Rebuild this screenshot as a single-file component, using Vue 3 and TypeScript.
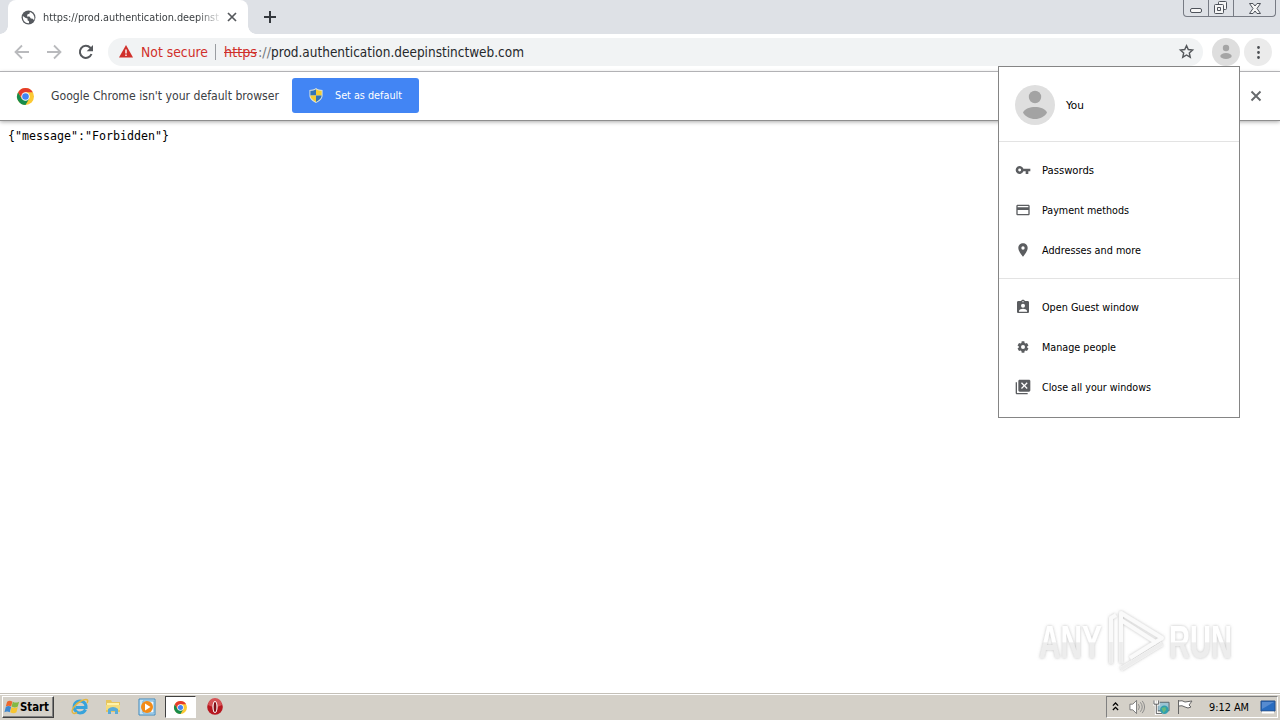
<script setup lang="ts">
interface MenuItem {
  label: string
  icon: string
  width: number
}

const credentials: MenuItem[] = [
  { label: 'Passwords', width: 52, icon: 'M12.65 10A6 6 0 1 0 12.65 14H16v4h4v-4h3v-4zM7 14.2A2.2 2.2 0 1 1 7 9.8a2.2 2.2 0 0 1 0 4.4z' },
  { label: 'Payment methods', width: 87, icon: 'M20 4H4c-1.1 0-2 .9-2 2v12c0 1.1.9 2 2 2h16c1.1 0 2-.9 2-2V6c0-1.1-.9-2-2-2zm0 14H4v-6h16v6zm0-10H4V6h16v2z' },
  { label: 'Addresses and more', width: 99, icon: 'M12 2C8.1 2 5 5.1 5 9c0 5.3 7 13 7 13s7-7.7 7-13c0-3.900-3.100-7-7-7zm0 9.500a2.500 2.500 0 1 1 0-5 2.500 2.500 0 0 1 0 5z' },
]

const people: MenuItem[] = [
  { label: 'Open Guest window', width: 97, icon: 'M19 3h-4.200C14.400 1.800 13.300 1 12 1s-2.400.8-2.800 2H5c-1.100 0-2 .9-2 2v14c0 1.100.9 2 2 2h14c1.100 0 2-.9 2-2V5c0-1.100-.9-2-2-2zm-7 0a1 1 0 1 1 0 2 1 1 0 0 1 0-2zm0 4a3 3 0 1 1 0 6 3 3 0 0 1 0-6zm6 12H6v-1.400c0-2 4-3.100 6-3.100s6 1.100 6 3.100V19z' },
  { label: 'Manage people', width: 74, icon: 'M18.2 12.8a6.300 6.300 0 0 0 0-1.600l2-1.500-2.200-3.800-2.300.9a6.500 6.500 0 0 0-1.300-.8L14 3.500h-4l-.4 2.500c-.5.2-.9.500-1.300.8L6 5.900 3.800 9.700l2 1.500a6.300 6.300 0 0 0 0 1.600l-2 1.500L6 18.100l2.300-.9c.4.300.8.600 1.300.8l.4 2.500h4l.4-2.500c.5-.2.9-.5 1.300-.8l2.300.9 2.200-3.800zM12 15a3 3 0 1 1 0-6 3 3 0 0 1 0 6z' },
  { label: 'Close all your windows', width: 109, icon: 'M1 5h2v16h16v2H3c-1.100 0-2-.9-2-2zM21 1H7C5.900 1 5 1.900 5 3v14c0 1.100.9 2 2 2h14c1.100 0 2-.9 2-2V3c0-1.100-.9-2-2-2zm-2 12.600L17.600 15 14 11.400 10.400 15 9 13.600l3.600-3.600L9 6.400 10.400 5 14 8.600 17.600 5 19 6.400 15.400 10z' },
]

const groups: MenuItem[][] = [credentials, people]
</script>

<template>
  <div class="screen">
    <header class="tabs">
      <div class="tab">
        <svg class="globe" viewBox="0 0 16 16"><circle cx="8" cy="8" r="7.400" fill="#55595e" /><path d="M2 6.500 5 8.500 7 9v2l1.500 1v2.200C4.500 14.500 1.600 11.500 2 6.500zM9.500 2.200 9 4 7 4.600 6.300 7 9 7l1.500 2 2 .3L14 11c1.200-3.800-1-7.700-4.500-8.800z" fill="#fff" /></svg>
        <div class="title"><svg width="176" height="16"><text x="0" y="12" textLength="176" lengthAdjust="spacingAndGlyphs">https://prod.authentication.deepinst</text></svg></div>
        <svg class="tab-close" viewBox="0 0 10 10"><path d="m1 1 8 8m0-8-8 8" /></svg>
      </div>
      <svg class="plus" viewBox="0 0 12 12"><path d="M6 0v12M0 6h12" /></svg>
      <div class="controls">
        <span><svg width="13" height="6"><rect x=".5" y=".5" width="11" height="4" rx="1.500" /></svg></span>
        <span><svg width="14" height="14"><path d="M4.500 3.500v-2q0-1 1-1h6q1 0 1 1v6q0 1-1 1h-2M1.500 3.500h7q1 0 1 1v7q0 1-1 1h-7q-1 0-1-1v-7q0-1 1-1zM3.500 6.500h3v3h-3z" /></svg></span>
        <span><svg width="12" height="11"><path d="M.5.5H4L6 3 8 .5h3.500L8 5.500l3.500 5H8L6 8l-2 2.500H.5L4 5.500z" /></svg></span>
      </div>
    </header>

    <nav class="toolbar">
      <svg class="nav" viewBox="0 0 16 16"><path d="M15 8H2M8 1.500 1.500 8 8 14.500" /></svg>
      <svg class="nav" viewBox="0 0 16 16"><path d="M1 8h13M8 1.500 14.500 8 8 14.500" /></svg>
      <svg class="nav reload" viewBox="0 0 16 16"><path d="M13.500 10A6 6 0 1 1 12.300 3.800L14 5.500" /><path class="solid" d="M15 1v6.300H8.700z" /></svg>
      <div class="omnibox">
        <svg class="warning" viewBox="0 0 14 13"><path d="M7 0 14 12.500H0z" fill="#d0302b" /><path d="M7 4.500v4M7 9.600v1.400" stroke="#fff" stroke-width="1.400" /></svg>
        <svg class="insecure" width="68" height="18"><text x="0" y="14" textLength="67" lengthAdjust="spacingAndGlyphs">Not secure</text></svg>
        <i class="separator"></i>
        <svg class="url" width="302" height="18">
          <text x="0" y="14" class="scheme" textLength="33" lengthAdjust="spacingAndGlyphs">https</text>
          <path d="M0 9.500h33" stroke="#d0302b" />
          <text x="34" y="14" class="slashes" textLength="13" lengthAdjust="spacingAndGlyphs">://</text>
          <text x="47" y="14" textLength="253" lengthAdjust="spacingAndGlyphs">prod.authentication.deepinstinctweb.com</text>
        </svg>
        <svg class="star" viewBox="0 0 16 16"><path d="m8 1.700 1.900 4.200 4.600.5L11 9.500l1 4.600-4-2.400-4 2.400 1-4.600-3.500-3.100 4.600-.5z" /></svg>
      </div>
      <svg class="round" viewBox="0 0 28 28"><circle cx="14" cy="14" r="14" fill="#dedede" /><circle cx="14" cy="10" r="3.200" fill="#a5a5a5" /><ellipse cx="14" cy="18" rx="5.700" ry="3" fill="#a5a5a5" /></svg>
      <svg class="round more" viewBox="0 0 28 28"><circle cx="14" cy="14" r="14" fill="#ebebeb" /><path d="M14.500 9.500h.01M14.500 14.500h.01M14.500 19.500h.01" stroke="#4b4e52" stroke-width="2.800" stroke-linecap="round" /></svg>
    </nav>

    <section class="infobar">
      <svg class="chrome" viewBox="0 0 18 18"><use href="#chrome-logo" /></svg>
      <svg class="notice" width="230" height="18"><text x="0" y="13" textLength="228" lengthAdjust="spacingAndGlyphs">Google Chrome isn't your default browser</text></svg>
      <button>
        <svg class="shield" viewBox="0 0 14 16"><path d="M7 0c2 1.500 4.500 2 7 2v6c0 3.500-3 6-7 8-4-2-7-4.500-7-8V2c2.500 0 5-.5 7-2z" fill="#dce3dc" /><path d="M7 1.300V8H1V3c2.200 0 4.300-.5 6-1.700z" fill="#3274b5" /><path d="M7 1.300C8.700 2.500 10.800 3 13 3v5H7z" fill="#f4cd31" /><path d="M1 8h6v6.800C3.500 13 1 11 1 8z" fill="#f4cd31" /><path d="M7 8h6c0 3-2.500 5-6 6.800z" fill="#3274b5" /></svg>
        <svg width="68" height="16"><text x="0" y="12" textLength="67" lengthAdjust="spacingAndGlyphs">Set as default</text></svg>
      </button>
      <svg class="dismiss" viewBox="0 0 10 10"><path d="m.5.5 9 9m0-9-9 9" /></svg>
    </section>

    <main>
      <svg width="164" height="18"><text x="0" y="13" textLength="161" lengthAdjust="spacingAndGlyphs">{"message":"Forbidden"}</text></svg>
    </main>

    <aside class="menu">
      <div class="you">
        <svg class="avatar" viewBox="0 0 40 40"><circle cx="20" cy="20" r="20" fill="#dfdfdf" /><circle cx="20" cy="12" r="6.200" fill="#a3a3a3" /><path d="M8 27.500C10 23.500 15 22 20 22s10 1.500 12 5.500c-2 4-7 6.500-12 6.500S10 31.500 8 27.500z" fill="#a3a3a3" /></svg>
        <svg width="20" height="16"><text x="0" y="12" textLength="18" lengthAdjust="spacingAndGlyphs">You</text></svg>
      </div>
      <div v-for="(group, index) in groups" :key="index" class="group">
        <div v-for="item in group" :key="item.label" class="item">
          <svg class="item-icon" viewBox="0 0 24 24"><path :d="item.icon" fill-rule="evenodd" /></svg>
          <svg width="120" height="16"><text x="0" y="12" :textLength="item.width" lengthAdjust="spacingAndGlyphs">{{ item.label }}</text></svg>
        </div>
      </div>
    </aside>

    <svg class="watermark" viewBox="0 0 210 74">
      <defs>
        <linearGradient id="silver" x1="0" y1="0" x2="0" y2="1"><stop offset=".49" stop-color="#fff" /><stop offset=".52" stop-color="#ededed" /></linearGradient>
        <filter id="halo" x="-10%" y="-20%" width="120%" height="140%"><feDropShadow dx="0" dy="0" stdDeviation="1.800" flood-color="#888" flood-opacity=".55" /></filter>
      </defs>
      <g filter="url(#halo)">
        <g class="brand"><text x="9" y="53" textLength="63" lengthAdjust="spacingAndGlyphs">ANY</text><text x="139" y="53" textLength="63" lengthAdjust="spacingAndGlyphs">RUN</text></g>
        <path d="M81 58V13l5-3M91 58V8l41 25-32 20M91 15l36 23M91 64l41-25" fill="none" stroke="#fafafa" stroke-width="4" stroke-linejoin="round" />
        <path d="M81 59V37M91 58V37M91 64l41-25" fill="none" stroke="#ededed" stroke-width="3.500" />
      </g>
    </svg>

    <footer class="taskbar">
      <div class="start">
        <svg class="flag" viewBox="0 0 18 16"><path d="M3.500 2q3-2 6 0L8 7.500q-3-2-6 0z" fill="#ed672d" /><path d="M10 2q3 2 7 0l-1.500 5.500q-3 2-7 0z" fill="#83b944" /><path d="M2 8q3-2 6 0l-1.500 6q-3-2-6 0z" fill="#3e87cf" /><path d="M8.500 8q3 2 7 0L14 14q-3 2-7 0z" fill="#f7c531" /></svg>
        <svg width="30" height="16"><text x="0" y="12" textLength="29" lengthAdjust="spacingAndGlyphs">Start</text></svg>
      </div>
      <svg class="app ie" viewBox="0 0 18 18"><path d="M14.500 11.500A6 6 0 1 1 15 8v1.500H5" fill="none" stroke="#38a3db" stroke-width="3" /><path d="M2 15C-1 13 4 6 10 3s8-1 6 2M2 15c1 1 3 0 4-.5" fill="none" stroke="#e3b640" stroke-width="1.500" /></svg>
      <svg class="app folder" viewBox="0 0 18 18"><path d="M2 2h5l1 2h8v10H2z" fill="#e7c55e" /><path d="M3 5h12v6H3z" fill="#fff2a8" /><path d="M2 7h14v5H2z" fill="#f4dc7d" /><path d="M4 16v-5q5-4 10 0v5h-3v-3H7v3z" fill="#58abd8" /></svg>
      <svg class="app media" viewBox="0 0 18 18"><path d="M1 1h16v16H1z" fill="#c8e5f6" stroke="#3e89bd" /><path d="M5 3h11v12H5z" fill="#f5f9fc" stroke="#67a9d5" /><circle cx="9" cy="9" r="6" fill="#f28b18" /><path d="m7 5.500 5.500 3.500L7 12.500z" fill="#fff" /></svg>
      <div class="active">
        <svg class="small-chrome" viewBox="0 0 18 18">
          <g id="chrome-logo"><circle cx="9" cy="9" r="9" fill="#fcc934" /><path d="M1.200 4.500A9 9 0 0 0 9 18l3.900-6.750L5.100 11.250z" fill="#188c4b" /><path d="M1.200 4.500A9 9 0 0 1 16.800 4.500H9L5.100 11.250z" fill="#e53b2d" /><circle cx="9" cy="9" r="4.500" fill="#fff" /><circle cx="9" cy="9" r="3.500" fill="#4285f4" /></g>
        </svg>
      </div>
      <svg class="app opera" viewBox="0 0 18 18"><circle cx="9" cy="9" r="7.800" fill="#b71720" /><path d="M2 7a7 7 0 0 1 14 0q-7 4-14 0" fill="#d65356" /><ellipse cx="9" cy="9" rx="2.600" ry="6" fill="#fff" /><ellipse cx="9" cy="9" rx="1.400" ry="5" fill="#821017" /></svg>
      <div class="tray">
        <svg class="chevron" viewBox="0 0 8 10"><path d="m1 4 3-3 3 3M1 9l3-3 3 3" fill="none" stroke="#000" stroke-width="1.500" /></svg>
        <svg class="speaker" viewBox="0 0 18 16"><path d="M1 5h3l4-4v14l-4-4H1z" fill="#fff" stroke="#777" /><path d="M10 5q2 3 0 6M12 3q4 5 0 10M14 1.500q5 6.500 0 13" fill="none" stroke="#888" /></svg>
        <svg class="network" viewBox="0 0 18 16"><path d="M5 3h12v9H5z" fill="#9bc4d4" stroke="#55646b" /><path d="M1.500 1v4h4V1M3.500 5v10h6" fill="none" stroke="#fff" stroke-width="3" /><path d="M1 1v4h5V1M3.500 5v10h6" fill="none" stroke="#555" /><circle cx="12" cy="11" r="4.500" fill="#319fae" /><path d="m9 9 4-1 1 3-3 3z" fill="#68b87c" /></svg>
        <svg class="action" viewBox="0 0 16 16"><path d="M1.500 1v14M2 2q3-1 6 1l7-1-3 4 2 2q-3 2-6 0-3-2-6-1" fill="#fff" stroke="#666" /></svg>
        <svg class="clock" width="42" height="16"><text x="0" y="12" textLength="40" lengthAdjust="spacingAndGlyphs">9:12 AM</text></svg>
        <svg class="desktop" viewBox="0 0 16 14"><path d="M1 1h14v10H1z" fill="#286cc0" stroke="#244e89" /><path d="M2 2h12L2 9z" fill="#568bd0" /><path d="M2 12.500h12" stroke="#fff" stroke-width="2" /></svg>
      </div>
    </footer>
  </div>
</template>

<style>
body { overflow: hidden; }
</style>

<style scoped>
* { box-sizing: border-box; }
.screen { position: relative; display: flex; flex-direction: column; width: 1280px; height: 720px; overflow: hidden; background: #fff; color: #000; font: 11px "DejaVu Sans Condensed", "Noto Sans", sans-serif; }
svg { display: block; flex: none; overflow: visible; }
.tabs { height: 34px; background: #dee1e6; display: flex; padding-left: 8px; align-items: flex-start; }
.tab { position: relative; width: 240px; height: 34px; background: #fff; border-radius: 8px 8px 0 0; display: flex; align-items: center; padding-left: 13px; }
.tab::before, .tab::after { content: ''; position: absolute; width: 8px; height: 8px; bottom: 0; }
.tab::before { left: -8px; background: radial-gradient(circle at 0 0, transparent 7.500px, #fff 8px); }
.tab::after { right: -8px; background: radial-gradient(circle at 100% 0, transparent 7.500px, #fff 8px); }
.globe { width: 15px; height: 15px; margin-right: 7px; }
.title { width: 177px; mask-image: linear-gradient(90deg, #000 154px, transparent 180px); fill: #3c4043; }
.tab-close { width: 10px; height: 10px; margin-left: 7px; fill: none; stroke: #55585c; stroke-width: 1.700; }
.plus { width: 12px; height: 12px; margin: 11px 0 0 16px; stroke: #34383d; stroke-width: 2; }
.controls { display: flex; width: 93px; height: 17px; margin-left: auto; margin-right: 4px; border: 1px solid #777b84; border-top: 0; border-radius: 0 0 4px 4px; }
.controls span { width: 25px; display: grid; place-items: center; border-right: 1px solid #777b84; }
.controls span:first-child { padding-top: 5px; }
.controls span:last-child { width: 41px; border: 0; }
.controls svg { fill: #f6f6f6; stroke: #4e535b; stroke-width: 1; }
.toolbar { height: 38px; display: flex; align-items: center; padding: 0 0 2px 14px; border-bottom: 1px solid #b4b4b8; }
.nav { width: 16px; height: 16px; margin-right: 16px; fill: none; stroke: #b9babd; stroke-width: 1.800; }
.reload { margin-right: 14px; stroke: #55585c; stroke-width: 2; }
.reload .solid { fill: #55585c; stroke: none; }
.omnibox { display: flex; align-items: center; width: 1095px; height: 28px; border-radius: 14px; background: #f1f3f4; padding-left: 11px; font-size: 14px; }
.warning { width: 14px; height: 13px; }
.insecure { margin-left: 8px; fill: #d0302b; }
.separator { width: 1px; height: 16px; background: #9a9da1; margin: 0 8px 0 6px; }
.url { fill: #25282b; }
.scheme { fill: #d0302b; }
.slashes { fill: #73777b; }
.star { width: 15px; height: 15px; margin: 0 9px 0 auto; fill: none; stroke: #55585c; stroke-width: 1.500; }
.round { width: 28px; height: 28px; margin-left: 9px; }
.more { margin-left: 4px; }
.infobar { height: 49px; border-bottom: 1px solid #8e8e8e; box-shadow: 0 1px 4px #aaa; display: flex; align-items: center; padding: 0 19px 0 17px; }
.chrome { width: 17px; height: 17px; }
.notice { margin-left: 17px; font-size: 12px; fill: #3c4043; }
.infobar button { width: 127px; height: 35px; margin: 0 0 2px 11px; border: 0; border-radius: 3px; background: #4285f4; color: #fff; fill: #fff; padding: 0 0 0 17px; display: flex; align-items: center; font: inherit; }
.shield { width: 14px; height: 15px; margin-right: 12px; }
.dismiss { width: 10px; height: 10px; margin-left: auto; fill: none; stroke: #66696c; stroke-width: 1.900; }
main { padding: 6px 8px; font: 12px "DejaVu Sans Mono", monospace; flex: 1; }
.menu { position: absolute; left: 998px; top: 66px; width: 242px; height: 352px; background: #fff; border: 1px solid #858585; }
.you { height: 75px; border-bottom: 1px solid #e3e3e3; display: flex; align-items: center; padding: 2px 0 0 16px; }
.avatar { width: 40px; height: 40px; margin-right: 11px; }
.group { height: 137px; padding-top: 8px; border-bottom: 1px solid #e3e3e3; }
.group:last-child { border: 0; }
.item { height: 40px; padding-left: 16px; display: flex; align-items: center; }
.item-icon { width: 16px; height: 16px; margin-right: 11px; fill: #5b5d60; }
.watermark { position: absolute; left: 1030px; top: 605px; width: 210px; height: 74px; }
.brand { font: bold 46px "Liberation Sans Narrow", "Liberation Sans", sans-serif; fill: url(#silver); }
.taskbar { height: 27px; background: #d4d0c8; border-top: 1px solid #c4c0b8; box-shadow: inset 0 1px #fff; display: flex; align-items: center; padding-left: 2px; }
.start { width: 52px; height: 22px; background: #d4d0c8; border: 1px solid; border-color: #fff #404040 #404040 #fff; box-shadow: inset -1px -1px #808080; display: flex; align-items: center; padding-left: 1px; font-size: 12px; font-weight: bold; }
.flag { width: 16px; height: 16px; }
.app { width: 18px; height: 18px; }
.ie { margin-left: 17px; }
.folder { margin-left: 15px; }
.media { margin-left: 16px; }
.active { width: 31px; height: 22px; margin-left: 9px; border: 1px solid; border-color: #404040 #fff #fff #404040; background: #fff; display: grid; place-items: center; }
.small-chrome { width: 13px; height: 13px; }
.opera { margin-left: 10px; }
.tray { width: 172px; height: 22px; margin: 0 2px 0 auto; border: 1px solid; border-color: #808080 #fff #fff #808080; display: flex; align-items: center; padding-left: 5px; }
.chevron { width: 7px; height: 9px; margin-bottom: 2px; }
.speaker { width: 17px; height: 16px; margin-left: 10px; }
.network { width: 17px; height: 16px; margin-left: 7px; }
.action { width: 16px; height: 16px; margin-left: 7px; }
.clock { margin-left: 16px; }
.desktop { width: 16px; height: 14px; margin-left: 9px; }
</style>
